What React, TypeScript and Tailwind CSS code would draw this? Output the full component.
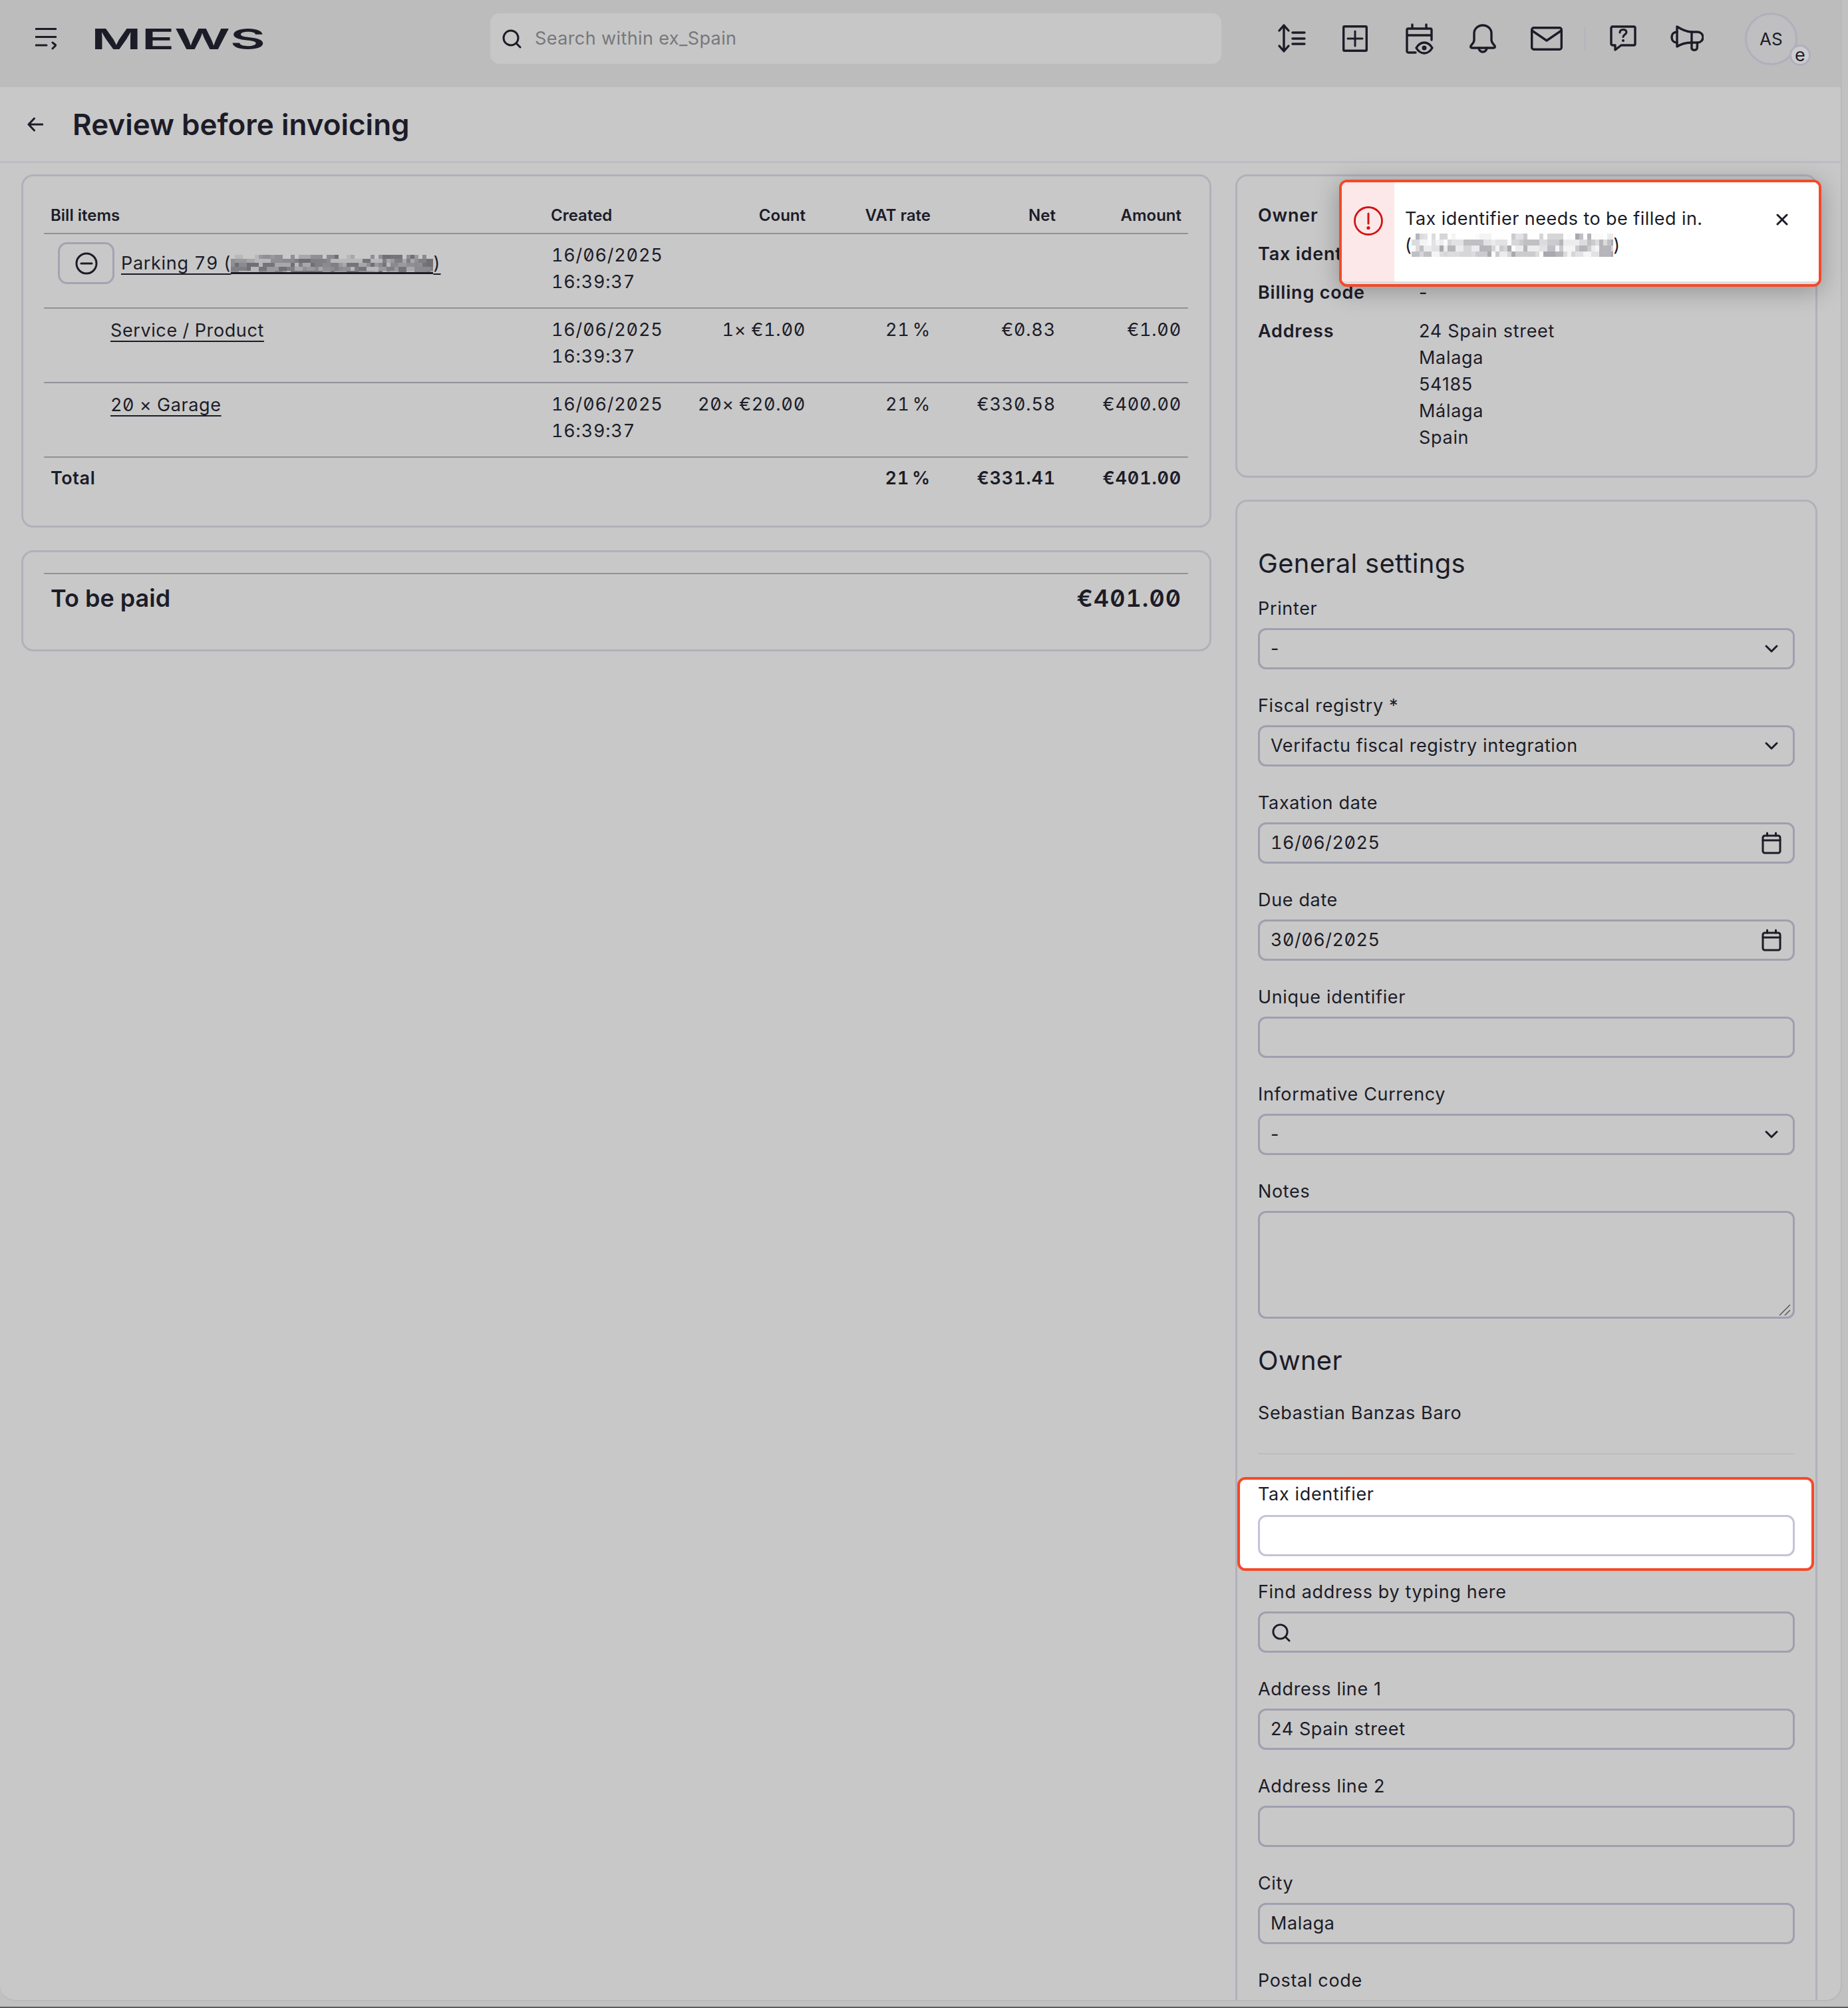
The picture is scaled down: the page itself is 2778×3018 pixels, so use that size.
import React from "react";

const ink = "#1c1c28";

function Mosaic({ w, h, block, blockH, seed, palette, sparseTop }: { w: number; h: number; block: number; blockH: number; seed: number; palette: string[]; sparseTop?: boolean }) {
  const cells: React.ReactElement[] = [];
  let s = seed;
  const rnd = () => {
    s = (s * 16807) % 2147483647;
    return (s - 1) / 2147483646;
  };
  const cols = Math.ceil(w / block);
  const rows = Math.ceil(h / blockH);
  for (let r = 0; r < rows; r++) {
    for (let c = 0; c < cols; c++) {
      if (sparseTop && r === 0 && rnd() < 0.55) continue;
      const p = rnd();
      const span = p < 0.3 ? 2 : p < 0.45 ? 3 : 1;
      const col = palette[Math.floor(rnd() * palette.length)];
      cells.push(<rect key={r + "-" + c} x={c * block} y={r * blockH} width={block * span} height={blockH} fill={col} />);
      c += span - 1;
    }
  }
  return (
    <svg width={w} height={h} viewBox={`0 0 ${w} ${h}`} shapeRendering="crispEdges" className="block">
      {cells}
    </svg>
  );
}

const darkPalette = ["#6f6f76", "#7f7f85", "#8f8f94", "#9a9a9e", "#a8a8ab", "#b8b8ba", "#8a8a90", "#757579"];
const lightPalette = ["#f4f4f4", "#ececec", "#e2e2e4", "#d6d6d8", "#cbcbce", "#c0c0c4", "#b5b5ba", "#fbfbfb", "#dcdcde", "#a8a8ae"];
const cols = "grid-cols-[752px_180px_203px_188px_188px_189px]";

function Chevron() {
  return (
    <svg width="22" height="14" viewBox="0 0 22 14" fill="none" stroke={ink} strokeWidth="3" strokeLinecap="round" strokeLinejoin="round" className="mr-[1px]">
      <path d="M3 3l8 8 8-8" />
    </svg>
  );
}

function Calendar() {
  return (
    <svg width="30" height="34" viewBox="0 0 30 34" fill="none" stroke={ink} strokeWidth="3" strokeLinecap="round" strokeLinejoin="round" className="-mr-[3px]">
      <rect x="2" y="6" width="26" height="26" rx="3" />
      <path d="M2 13h26M8.500 2v4M21.500 2v4" />
    </svg>
  );
}

function Search({ size }: { size: number }) {
  return (
    <svg width={size} height={size} viewBox="0 0 30 30" fill="none" stroke={ink} strokeWidth="3" strokeLinecap="round">
      <circle cx="14" cy="14" r="11" />
      <path d="M22 22l6 6" />
    </svg>
  );
}

function Box({ value, icon, mono, white }: { value?: string; icon?: React.ReactNode; mono?: boolean; white?: boolean }) {
  return (
    <div className={`flex h-[62px] items-center justify-between rounded-[12px] border-[3px] pl-[16px] pr-[20px] text-[27px] ${white ? "border-[#c4c3d9] bg-white" : "border-[#a09fb0]"} ${mono ? "tabular-nums slashed-zero tracking-[0.5px]" : "tracking-[0.6px]"}`}>
      <span>{value}</span>
      {icon}
    </div>
  );
}

function Field({ label, children }: { label: string; children: React.ReactNode }) {
  return (
    <div className="mb-[36px]">
      <div className="mb-[10px] h-[38px] text-[27px] leading-[38px] tracking-[0.65px]">{label}</div>
      {children}
    </div>
  );
}

function Row({ name, count, net, amount }: { name: React.ReactNode; count?: string; net?: string; amount?: string }) {
  return (
    <div className={`grid h-[112px] ${cols} border-b-2 border-[#919199] pl-[10px] pr-[10px] text-[27px] leading-[40px] tabular-nums slashed-zero tracking-[0.8px]`}>
      <div className="pt-[13px]">{name}</div>
      <div className="whitespace-nowrap pl-[1px] pt-[12px]">
        <div>16/06/2025</div>
        <div>16:39:37</div>
      </div>
      <div className="whitespace-nowrap pt-[12px] text-right [word-spacing:-1px]">{count}</div>
      <div className="pt-[12px] text-right [word-spacing:-4px]">{amount ? "21 %" : ""}</div>
      <div className="pt-[12px] text-right">{net}</div>
      <div className="pt-[12px] text-right">{amount}</div>
    </div>
  );
}

export default function App() {
  return (
    <div className="relative h-[3018px] w-[2778px] overflow-hidden border-b-2 border-[#5c5c5c] bg-[#c1c1c1] [font-family:Inter,'Noto_Sans',sans-serif]" style={{ color: ink }}>
      <div className="h-[3008px] w-[2769px] overflow-hidden rounded-b-[24px] border-b-2 border-r-2 border-[#b9b9b9] bg-[#c8c8c8]">
        {/* Top bar */}
        <header className="flex h-[131px] items-center bg-[#bcbcbc] pb-[15px] pl-[53px]">
          <svg width="32" height="34" viewBox="0 0 32 34" fill="none" stroke={ink} strokeWidth="3" strokeLinecap="round" strokeLinejoin="round" className="shrink-0">
            <path d="M1 2.500h30M1 14.500h30M1 27h16M26 23l5 4-5 5" />
          </svg>
          <svg width="254" height="50" viewBox="0 0 254 50" className="ml-[56px] shrink-0 overflow-visible">
            <text x="-4" y="40.500" fontSize="43" fontWeight="600" textLength="262" lengthAdjust="spacingAndGlyphs" fill={ink} fontFamily="Inter, sans-serif">MEWS</text>
          </svg>
          <div className="ml-[342px] flex h-[76px] w-[1099px] shrink-0 items-center rounded-[14px] bg-[#c7c7c7] pl-[17px]">
            <Search size={30} />
            <span className="ml-[20px] text-[27px] tracking-[0.4px] text-[#77777d]">Search within ex_Spain</span>
          </div>
          <svg width="40" height="44" viewBox="0 0 40 44" fill="none" stroke={ink} strokeWidth="3.400" strokeLinecap="round" strokeLinejoin="round" className="ml-[87px] shrink-0 overflow-visible">
            <path d="M7 2v39M0 10l7-8 7 8M0 33l7 8 7-8" />
            <path d="M20 13h18M20 22h18M20 30h18" />
          </svg>
          <svg width="38" height="40" viewBox="0 0 38 40" fill="none" stroke={ink} strokeWidth="3.400" strokeLinecap="round" strokeLinejoin="round" className="ml-[55px] shrink-0">
            <rect x="1.700" y="1.700" width="34.600" height="36.600" rx="1.500" />
            <path d="M19 9v22M8 20h22" strokeWidth="3" />
          </svg>
          <svg width="42" height="46" viewBox="0 0 42 46" fill="none" stroke={ink} strokeWidth="3.400" strokeLinecap="round" strokeLinejoin="round" className="ml-[57px] shrink-0 overflow-visible">
            <path d="M15 44H4a2 2 0 0 1-2-2V10a2 2 0 0 1 2-2h33a2 2 0 0 1 2 2v15M2 18h37M10 2v6M31 2v6" />
            <path d="M16 37c3-5 7-8 12-8s9 3 12 8c-3 5-7 8-12 8s-9-3-12-8z" />
            <circle cx="28" cy="37" r="1.800" fill={ink} stroke={ink} />
          </svg>
          <svg width="42" height="44" viewBox="0 0 42 44" fill="none" stroke={ink} strokeWidth="3.400" strokeLinecap="round" strokeLinejoin="round" className="ml-[53px] shrink-0">
            <path d="M8 24V14a13 12 0 0 1 26 0v10c0 4 3 6 5 9 1 2 0 3-2 3H5c-2 0-3-1-2-3 2-3 5-5 5-9z" />
            <path d="M15 36a6 6 0 0 0 12 0" />
          </svg>
          <svg width="48" height="36" viewBox="0 0 48 36" fill="none" stroke={ink} strokeWidth="3.400" strokeLinecap="round" strokeLinejoin="round" className="ml-[51px] shrink-0">
            <rect x="1.700" y="1.700" width="44.600" height="32.600" rx="3" />
            <path d="M2 6l22 15L46 6" />
          </svg>
          <div className="ml-[32px] h-[36px] w-[3px] shrink-0 bg-[#b6b6c0]" />
          <svg width="40" height="40" viewBox="0 0 40 40" fill="none" stroke={ink} strokeWidth="3.400" strokeLinecap="round" strokeLinejoin="round" className="ml-[36px] shrink-0">
            <path d="M4 2h32a2 2 0 0 1 2 2v24a2 2 0 0 1-2 2H17l-9 7v-7H4a2 2 0 0 1-2-2V4a2 2 0 0 1 2-2z" />
            <path d="M15 11c0-3 2-4.500 5-4.500s5 1.500 5 4c0 3-5 3.500-5 7" strokeWidth="3" />
            <circle cx="20" cy="23" r="1.300" fill={ink} strokeWidth="1.500" />
          </svg>
          <svg width="50" height="40" viewBox="0 0 50 40" fill="none" stroke={ink} strokeWidth="3.400" strokeLinecap="round" strokeLinejoin="round" className="ml-[51px] shrink-0">
            <path d="M10 2v30c6-4 14-6 24-6h7a8 8 0 0 0 0-16h-8C26 10 18 7 10 2z" />
            <path d="M10 10c-5 0-8 3-8 8s3 8 8 8" />
            <path d="M32 10v25c1 3 7 3 8 0 .5-2 .5-6 .5-9" />
          </svg>
          <div className="relative ml-[62px] flex h-[79px] w-[79px] shrink-0 items-center justify-center rounded-full border-[3px] border-[#b0b0bc] bg-[#bfbfc1] text-[26px] tracking-[0.3px]">
            AS
            <div className="absolute left-[64px] top-[45px] flex h-[32px] w-[32px] items-center justify-center rounded-full border-[3px] border-[#b0b0bc] bg-[#cbcbd0] text-[27px] leading-none">e</div>
          </div>
        </header>

        {/* Title */}
        <div className="flex h-[114px] items-center border-b-[3px] border-[#bcbcc4] pl-[41px]">
          <svg width="24" height="22" viewBox="0 0 24 22" fill="none" stroke={ink} strokeWidth="3" strokeLinecap="round" strokeLinejoin="round" className="shrink-0">
            <path d="M23 11H2M10.500 2L2 11l8.500 9" />
          </svg>
          <h1 className="ml-[44px] text-[44px] font-semibold">Review before invoicing</h1>
        </div>

        {/* Main */}
        <div className="flex pl-[32px] pt-[17px]">
          <div className="w-[1789px] shrink-0">
            <section className="h-[531px] rounded-[18px] border-[3px] border-[#b1b1bb] pl-[31px] pr-[32px]">
              <div className={`grid h-[87px] ${cols} items-end border-b-2 border-[#919199] pb-[10px] pl-[10px] pr-[10px] text-[24px] font-semibold leading-[32px]`}>
                <div>Bill items</div>
                <div>Created</div>
                <div className="text-right">Count</div>
                <div className="text-right">VAT rate</div>
                <div className="text-right">Net</div>
                <div className="text-right">Amount</div>
              </div>
              <Row
                name={
                  <div className="-mt-[1px] flex">
                    <div className="ml-[11px] flex h-[63px] w-[85px] shrink-0 items-center justify-center rounded-[14px] border-[3px] border-[#a3a3b3]">
                      <svg width="34" height="34" viewBox="0 0 34 34" fill="none" stroke={ink} strokeWidth="3" strokeLinecap="round">
                        <circle cx="17" cy="17" r="15" />
                        <path d="M9 17h16" />
                      </svg>
                    </div>
                    <div className="ml-[10px] mt-[12px] flex h-[45px] items-start whitespace-nowrap tracking-[0.7px]">
                      <span className="underline underline-offset-[6px]">Parking 79 (</span>
                      <span className="mt-[7px] block border-b-[3px] border-[#1c1c28]">
                        <Mosaic w={304} h={26} block={6} blockH={6} seed={4711} palette={darkPalette} sparseTop />
                      </span>
                      <span className="underline underline-offset-[6px]">)</span>
                    </div>
                  </div>
                }
              />
              <Row name={<span className="ml-[90px] underline underline-offset-[6px] tracking-[0.6px]">Service / Product</span>} count="1× €1.00" net="€0.83" amount="€1.00" />
              <Row name={<span className="ml-[90px] underline underline-offset-[6px] tracking-[0.6px]">20 × Garage</span>} count="20× €20.00" net="€330.58" amount="€400.00" />
              <div className={`grid ${cols} pl-[10px] pr-[10px] pt-[11px] text-[27px] font-semibold leading-[40px] tabular-nums slashed-zero tracking-[0.8px]`}>
                <div className="tracking-[0.6px]">Total</div>
                <div />
                <div />
                <div className="text-right [word-spacing:-4px]">21 %</div>
                <div className="text-right">€331.41</div>
                <div className="text-right">€401.00</div>
              </div>
            </section>
            <section className="mt-[34px] h-[152px] rounded-[18px] border-[3px] border-[#b1b1bb] pl-[31px] pr-[32px] pt-[31px]">
              <div className="flex items-center justify-between border-t-2 border-[#919199] pl-[10px] pr-[10px] pt-[11px] text-[36px] font-semibold leading-[50px]">
                <span>To be paid</span>
                <span className="tabular-nums slashed-zero tracking-[1px]">€401.00</span>
              </div>
            </section>
          </div>

          <div className="ml-[36px] w-[875px] shrink-0">
            <section className="h-[456px] rounded-[18px] border-[3px] border-[#b1b1bb] pl-[31px] pt-[39px] text-[27px] leading-[40px]">
              <div className="grid grid-cols-[242px_1fr] gap-y-[18px] font-semibold tracking-[0.8px]">
                <div>Owner</div>
                <div />
                <div>Tax identifier</div>
                <div />
                <div>Billing code</div>
                <div className="font-normal">-</div>
                <div>Address</div>
                <div className="font-normal tracking-[0.7px]">
                  <div>24 Spain street</div>
                  <div>Malaga</div>
                  <div>54185</div>
                  <div>Málaga</div>
                  <div>Spain</div>
                </div>
              </div>
            </section>

            <section className="mt-[33px] rounded-[18px] border-[3px] border-[#b1b1bb] pl-[31px] pr-[31px] pt-[65px]">
              <h2 className="mb-[21px] h-[56px] text-[40px] leading-[56px] tracking-[0.3px]">General settings</h2>
              <Field label="Printer"><Box value="-" icon={<Chevron />} /></Field>
              <Field label="Fiscal registry *"><Box value="Verifactu fiscal registry integration" icon={<Chevron />} /></Field>
              <Field label="Taxation date"><Box value="16/06/2025" mono icon={<Calendar />} /></Field>
              <Field label="Due date"><Box value="30/06/2025" mono icon={<Calendar />} /></Field>
              <Field label="Unique identifier"><Box /></Field>
              <Field label="Informative Currency"><Box value="-" icon={<Chevron />} /></Field>
              <div className="mb-[35px]">
                <div className="mb-[10px] h-[38px] text-[27px] leading-[38px] tracking-[0.65px]">Notes</div>
                <div className="relative h-[162px] rounded-[12px] border-[3px] border-[#a09fb0]">
                  <svg width="18" height="18" viewBox="0 0 18 18" fill="none" stroke="#55555c" strokeWidth="1.500" className="absolute bottom-[1px] right-[3px]">
                    <path d="M1 17L17 1M9 17l8-8" />
                  </svg>
                </div>
              </div>
              <h2 className="h-[56px] text-[40px] leading-[56px] tracking-[0.3px]">Owner</h2>
              <div className="mt-[31px] h-[40px] text-[27px] leading-[40px] tracking-[0.65px]">Sebastian Banzas Baro</div>
              <div className="mt-[40px] h-[2px] bg-[#bcbcc2]" />
              <div className="-ml-[31px] -mr-[29px] mt-[34px] h-[141px] rounded-[12px] border-4 border-[#f4492a] bg-white pl-[27px] pr-[25px] pt-[3px]">
                <div className="mb-[12px] h-[38px] text-[27px] leading-[38px] tracking-[0.65px]">Tax identifier</div>
                <Box white />
              </div>
              <div className="mt-[13px]">
                <Field label="Find address by typing here">
                  <div className="flex h-[62px] items-center rounded-[12px] border-[3px] border-[#a09fb0] pl-[17px]">
                    <Search size={29} />
                  </div>
                </Field>
              </div>
              <Field label="Address line 1"><Box value="24 Spain street" /></Field>
              <Field label="Address line 2"><Box /></Field>
              <Field label="City"><Box value="Malaga" /></Field>
              <Field label="Postal code"><Box /></Field>
            </section>
          </div>
        </div>
      </div>

      {/* Toast */}
      <div className="absolute left-[2013px] top-[270px] flex h-[161px] w-[725px] overflow-hidden rounded-[12px] border-4 border-[#f4492a] bg-[#dedede] pb-[4px] shadow-[0_6px_36px_rgba(0,0,0,0.28)]">
        <div className="flex w-[79px] shrink-0 justify-center bg-[#fde8e9] pt-[36px]">
          <svg width="44" height="44" viewBox="0 0 44 44" fill="none" stroke="#d01414" strokeWidth="2.800" strokeLinecap="round">
            <circle cx="22" cy="22" r="20.500" />
            <path d="M22 11v15" strokeWidth="3" />
            <circle cx="22" cy="32.500" r="1.200" fill="#d01414" />
          </svg>
        </div>
        <div className="flex flex-1 bg-white pl-[16px] pt-[35px] text-[27px] leading-[40px] tracking-[0.45px]">
          <div className="w-[540px]">
            <div>Tax identifier needs to be filled in.</div>
            <div className="flex">
              <span>(</span>
              <span className="mt-[2px] block">
                <Mosaic w={303} h={35} block={6} blockH={9} seed={9137} palette={lightPalette} sparseTop />
              </span>
              <span>)</span>
            </div>
          </div>
          <svg width="18" height="18" viewBox="0 0 18 18" fill="none" stroke={ink} strokeWidth="3" strokeLinecap="round" className="ml-[18px] mt-[12px]">
            <path d="M2 2l14 14M16 2L2 16" />
          </svg>
        </div>
      </div>
    </div>
  );
}
